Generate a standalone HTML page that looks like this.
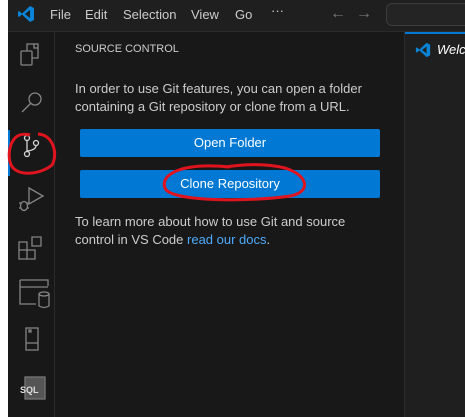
<!DOCTYPE html>
<html><head><meta charset="utf-8"><style>
*{margin:0;padding:0;box-sizing:border-box}
body{width:465px;height:417px;overflow:hidden;background:#181818;font-family:"Segoe UI","Liberation Sans",sans-serif;position:relative;color:#ccc}
.abs{position:absolute}
#white{left:0;top:0;width:8px;height:417px;background:#fff}
#title{left:8px;top:0;width:457px;height:32px;background:#1f1f1f;border-bottom:1px solid #2b2b2b}
.menu{top:7px;font-size:13px;color:#ccc}
#act{left:8px;top:32px;width:47px;height:385px;background:#181818;border-right:1px solid #2b2b2b}
#side{left:55px;top:32px;width:349px;height:385px;background:#181818}
#ed{left:404px;top:32px;width:61px;height:385px;background:#1f1f1f;border-left:1px solid #2b2b2b;overflow:hidden}
.btn{left:80px;width:300px;height:28px;background:#0078d4;border-radius:2px;color:#fff;font-size:13px;text-align:center;line-height:28px}
.p{left:75px;font-size:13px;line-height:18px;color:#ccc}
</style></head><body>
<div id="white" class="abs"></div>
<div id="title" class="abs"></div>
<svg class="abs" style="left:17px;top:5px" width="18" height="18" viewBox="0 0 18 18"><path d="M13 1 L17 3 V15 L13 17 L5 9.5 L2 12 L1 11.3 V6.7 L2 6 L5 8.5 Z M13 5 L8 9 L13 13 Z" fill="#0a84d6" fill-rule="evenodd"/></svg>
<div class="abs menu" style="left:50px">File</div>
<div class="abs menu" style="left:85px">Edit</div>
<div class="abs menu" style="left:123px">Selection</div>
<div class="abs menu" style="left:191px">View</div>
<div class="abs menu" style="left:235px">Go</div>
<div class="abs menu" style="left:271px;top:3px">···</div>
<div class="abs" style="left:330px;top:5px;color:#777;font-size:16px">←</div>
<div class="abs" style="left:356px;top:5px;color:#777;font-size:16px">→</div>
<div class="abs" style="left:386px;top:3px;width:79px;height:23px;border:1px solid #3c3c3c;border-right:none;border-radius:6px 0 0 6px;background:#242424"></div>
<div id="act" class="abs"></div>
<div class="abs" style="left:8px;top:130px;width:2px;height:46px;background:#0078d4"></div>
<svg class="abs" style="left:8px;top:32px" width="47" height="385" fill="none" stroke="#858585" stroke-width="1.3">
<rect x="13" y="19" width="11" height="14" rx="1"/><path d="M19 19 V12 H30 V26 H24"/><path d="M26 12 V16 H30"/>
<circle cx="27" cy="67" r="6"/><path d="M22.5 71.5 L14 80"/>
<g stroke="#d4d4d4"><circle cx="19" cy="106" r="2.5"/><circle cx="19" cy="122" r="2.5"/><circle cx="28" cy="111" r="2.5"/><path d="M19 108.5 V119.5 M28 113.5 Q28 118 19 119"/></g>
<path d="M21 156 L35 164 L21 172 Z"/><ellipse cx="16" cy="174" rx="3.5" ry="4.5"/><path d="M11 171 H13 M11 176 H13 M19 171 H21 M19 176 H21"/>
<path d="M11 218 H19 V227 H11 Z M19 218 H27 V227 H19 Z M11 210 H19 V218 H11 Z M24 205 H33 V214 H24 Z"/>
<path d="M12 255 H40 M12 248 H40 V254 M12 248 V272 H28"/><ellipse cx="36" cy="262" rx="5" ry="2"/><path d="M31 262 V274 Q36 277 41 274 V262"/>
<rect x="18" y="296" width="12" height="22"/><path d="M18 311 H30"/><rect x="21" y="298" width="2" height="2"/>
<rect x="17" y="345" width="20" height="22" fill="#555" stroke="#777"/>
</svg>
<div class="abs" style="left:20px;top:385px;font-size:9px;font-weight:bold;color:#ddd">SQL</div>
<div id="side" class="abs"></div>
<div class="abs" style="left:75px;top:43px;font-size:11px;color:#ccc">SOURCE CONTROL</div>
<div class="abs p" style="top:80px">In order to use Git features, you can open a folder<br>containing a Git repository or clone from a URL.</div>
<div class="abs btn" style="top:129px">Open Folder</div>
<div class="abs btn" style="top:170px">Clone Repository</div>
<div class="abs p" style="top:213px">To learn more about how to use Git and source<br>control in VS Code <span style="color:#4daafc">read our docs</span>.</div>
<div id="ed" class="abs">
<div class="abs" style="left:0;top:0;width:61px;height:2px;background:#0078d4"></div>
<svg class="abs" style="left:10px;top:10px" width="16" height="16" viewBox="0 0 18 18"><path d="M13 1 L17 3 V15 L13 17 L5 9.5 L2 12 L1 11.3 V6.7 L2 6 L5 8.5 Z M13 5 L8 9 L13 13 Z" fill="#0a84d6" fill-rule="evenodd"/></svg>
<div class="abs" style="left:32px;top:10px;font-size:13px;font-style:italic;color:#fff;white-space:nowrap">Welcome</div>
</div>
<svg class="abs" style="left:0;top:0" width="465" height="417" fill="none" stroke="#e0141e" stroke-width="3">
<path d="M30 135 C12 130 7 150 10 162 C14 178 40 175 52 165 C58 155 54 135 38 134"/>
<path d="M230 167 C180 162 160 175 165 188 C170 202 250 202 290 196 C312 192 308 175 285 168 C265 163 245 164 225 167"/>
</svg>
</body></html>
